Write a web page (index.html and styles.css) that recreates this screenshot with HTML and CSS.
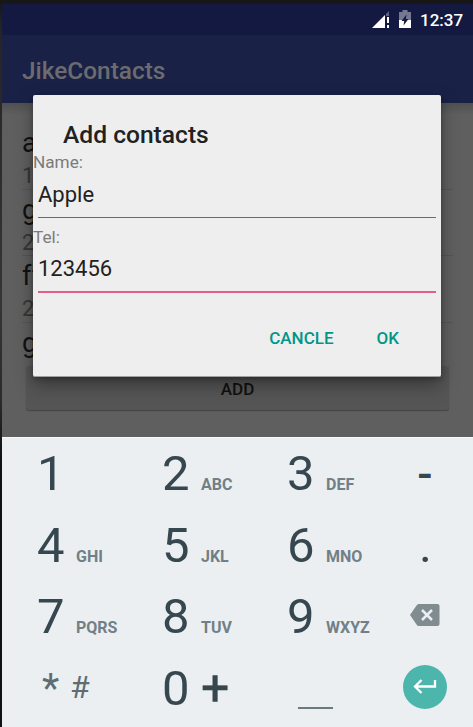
FILE: index.html
```html
<!DOCTYPE html>
<html lang="en">
<head>
<meta charset="utf-8">
<title>JikeContacts</title>
<link rel="stylesheet" href="styles.css">
</head>
<body>
<div class="screen">
  <div class="status-bar">
    <svg class="signal" width="18" height="18" viewBox="0 0 18 18"><path d="M17 0v5h-3v-2z" fill="#596080"/><path d="M0 17L13 4v13z" fill="#fff"/><path d="M15 6h2v6h-2zM15 14h2v3h-2z" fill="#fff"/></svg>
    <svg class="battery" width="12" height="18" viewBox="0 0 12 18"><path d="M3.500 0h5v2H12v8H0V2h3.500z" fill="#747891"/><path d="M0 10h12v8H0z" fill="#fff"/><path d="M7.500 4.500L2.500 11h2.700L4.500 15.500L9.500 9H6.800z" fill="#141941"/></svg>
    <span class="time">12:37</span>
  </div>
  <header class="app-bar">JikeContacts</header>
  <main class="content">
    <ul class="contacts">
      <li><b>a</b><span>1</span></li>
      <li><b>g</b><span>2</span></li>
      <li><b>ff</b><span>2</span></li>
      <li class="last"><b>g</b></li>
    </ul>
    <button class="add">ADD</button>
  </main>
  <section class="keyboard">
    <div class="key"><b>1</b></div>
    <div class="key"><b>2</b><span>ABC</span></div>
    <div class="key"><b>3</b><span>DEF</span></div>
    <div class="key side"><b class="dash">-</b></div>
    <div class="key"><b>4</b><span>GHI</span></div>
    <div class="key"><b>5</b><span>JKL</span></div>
    <div class="key"><b>6</b><span>MNO</span></div>
    <div class="key side"><b class="dot">.</b></div>
    <div class="key"><b>7</b><span>PQRS</span></div>
    <div class="key"><b>8</b><span>TUV</span></div>
    <div class="key"><b>9</b><span>WXYZ</span></div>
    <div class="key side erase"><svg width="30" height="22" viewBox="0 0 30 22"><path d="M8.500 0H27.500Q29.500 0 29.500 2V20Q29.500 22 27.500 22H8.500Q7.500 22 6.500 20.500L0 11L6.500 1.500Q7.500 0 8.500 0z" fill="#808c90"/><path d="M12 6l10 10M22 6L12 16" stroke="#ebeff2" stroke-width="2.500"/></svg></div>
    <div class="key symbols"><i class="star">*</i><i class="hash">#</i></div>
    <div class="key"><b>0</b><em>+</em></div>
    <div class="key space"><hr></div>
    <div class="key side return"><div class="enter"><svg width="24" height="16" viewBox="0 0 24 16"><path d="M22 1v6.500H2M8.500 1L2 7.500L8.500 14" fill="none" stroke="#fff" stroke-width="2.300"/></svg></div></div>
  </section>
</div>
<section class="dialog">
  <h1>Add contacts</h1>
  <label>Name:</label>
  <div class="field">Apple</div>
  <label class="tel">Tel:</label>
  <div class="field active">123456</div>
  <div class="actions"><span>CANCLE</span><span>OK</span></div>
</section>
</body>
</html>
```
FILE: styles.css
```css
* { box-sizing: border-box; }
body {
  margin: 0;
  width: 473px;
  height: 727px;
  overflow: hidden;
  font-family: Roboto, "Liberation Sans", sans-serif;
  background: linear-gradient(#161616, #252525 30px, #353535 300px, #2b2b2b 400px, #111 460px, #111);
}
.screen { padding: 4px 0 0 2px; }
.status-bar {
  height: 31px;
  background: #141941;
  display: flex;
  align-items: flex-start;
  color: #fff;
}
.signal { margin: 7px 0 0 370px; }
.battery { margin: 6px 0 0 9px; }
.time { margin: 6px 0 0 9px; font-size: 17px; line-height: 20px; font-weight: 500; }
.app-bar {
  height: 68px;
  padding: 3px 0 0 20px;
  background: #1a2147;
  color: #6c6c6e;
  font-size: 24.4px;
  line-height: 65px;
  font-weight: 500;
}
.content {
  height: 334px;
  padding-top: 20px;
  background: linear-gradient(#505050, #5f5f5f 12px);
}
.contacts { list-style: none; margin: 0 20px; padding: 0; }
.contacts li { height: 66.5px; border-bottom: 1px solid #555; padding-top: 4px; }
.contacts .last { height: 43px; border: 0; }
.contacts b { display: block; font-size: 27px; line-height: 32px; font-weight: 400; color: #111; }
.contacts span { display: block; font-size: 22px; line-height: 33px; color: #363636; }
.add {
  display: block;
  width: 423px;
  height: 44px;
  margin: 0 0 0 24px;
  padding: 1px 0 0;
  border: 0;
  border-radius: 3px;
  background: #555;
  box-shadow: 0 1px 1px #444;
  font: 500 17px/44px Roboto, sans-serif;
  color: #111;
}
.keyboard {
  height: 290px;
  border-top: 1px solid #f7f9fa;
  background: #ebeff2;
  display: grid;
  grid-template-columns: 125px 125px 125px 96px;
  grid-template-rows: repeat(4, 71.5px);
}
.key { display: flex; padding-left: 35px; color: #37474f; }
.key b { width: 39px; font-size: 49px; line-height: 71px; font-weight: 400; }
.key span { font-size: 16px; line-height: 93px; font-weight: 700; color: #718086; }
.key.side { padding: 0; justify-content: center; align-items: center; }
.key.side b { width: auto; }
.key .dash { font-size: 45px; font-weight: 500; }
.key .dot { padding-left: 1px; }
.key.erase { padding-bottom: 4px; }
.key.return { padding: 0 1px 2px 0; }
.key em { font: 400 50px/70px Roboto, sans-serif; -webkit-text-stroke: 0.4px #37474f; }
.key i { font-style: normal; font-weight: 400; color: #5f6d73; }
.key.symbols { padding-left: 40px; }
.star { width: 28px; font-size: 40px; font-weight: 300; line-height: 72px; }
.hash { font-size: 32px; line-height: 69px; font-weight: 300; }
.space { padding-left: 46px; }
.space hr { width: 35px; height: 2px; margin: 54px 0 0; border: 0; background: #6b7a81; }
.enter {
  width: 44px;
  height: 44px;
  border-radius: 50%;
  background: #4db6ac;
  display: flex;
  align-items: center;
  justify-content: center;
}
.dialog {
  position: absolute;
  left: 33px;
  top: 95px;
  width: 408px;
  height: 282px;
  padding-top: 26px;
  border-radius: 2px;
  background: #eee;
  border-bottom: 1px solid #a0a0a0;
  box-shadow: 0 8px 18px rgba(0,0,0,.35), 0 2px 5px rgba(0,0,0,.25);
  color: #212121;
}
.dialog h1 { margin: 0 0 3px 30px; font-size: 24.6px; line-height: 28px; font-weight: 500; }
.dialog label { display: block; font-size: 17.2px; line-height: 20px; color: #7b7b7b; }
.dialog .tel { margin-top: 9px; }
.field { height: 46px; margin: 0 5px; padding-top: 9px; font-size: 22px; line-height: 28px; border-bottom: 1px solid #6b6b6b; }
.field.active { padding-top: 8px; border-bottom: 2px solid #e75c8f; }
.actions {
  display: flex;
  justify-content: flex-end;
  gap: 43px;
  padding: 35px 42px 0 0;
  font-size: 17px;
  line-height: 20px;
  font-weight: 500;
  color: #009688;
}
```
